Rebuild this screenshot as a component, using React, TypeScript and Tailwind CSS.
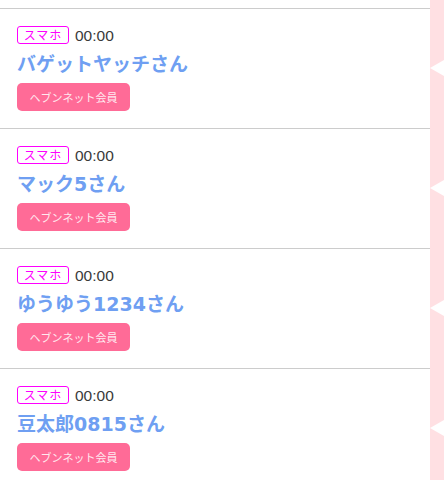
const members = [
  { name: "バゲットヤッチさん", time: "00:00" },
  { name: "マック5さん", time: "00:00" },
  { name: "ゆうゆう1234さん", time: "00:00" },
  { name: "豆太郎0815さん", time: "00:00" },
];

export default function App() {
  return (
    <div className="w-[444px] h-[480px] overflow-hidden bg-white font-['Liberation_Sans','Noto_Sans_CJK_JP',sans-serif]">
      {/* top spacer with strip */}
      <div className="flex h-[8px]">
        <div className="w-[430px]" />
        <div className="w-[14px] bg-[#ffe0e3]" />
      </div>
      {members.map((m) => (
        <div key={m.name} className="flex">
          <div className="w-[430px] border-t border-[#cccccc] px-[17px] pt-[17px] pb-[17px]">
            <div className="flex h-[18px] items-center gap-[6px]">
              <span className="flex h-[18px] w-[52px] items-center justify-center rounded-[3px] border border-[#ff00ff] font-['Noto_Sans_CJK_JP',sans-serif] text-[12px] leading-none tracking-[1px] text-[#ff00ff]">
                スマホ
              </span>
              <span className="pt-[1px] text-[15.5px] leading-none text-[#3a3a3a]">{m.time}</span>
            </div>
            <div className="mt-[7px] font-['DejaVu_Sans','Noto_Sans_CJK_JP',sans-serif] text-[19px] font-bold leading-[26px] text-[#6f9ff2]">
              {m.name}
            </div>
            <div className="mt-[6px] flex h-[28px] w-[113px] items-center justify-center rounded-[5px] bg-[#ff6b97] font-['Noto_Sans_CJK_JP',sans-serif] text-[11px] text-[#ffe8ef]">
              ヘブンネット会員
            </div>
          </div>
          <div className="flex w-[14px] items-center bg-[#ffe0e3]">
            <div className="h-0 w-0 border-y-[8px] border-r-[14px] border-y-transparent border-r-white" />
          </div>
        </div>
      ))}
    </div>
  );
}
